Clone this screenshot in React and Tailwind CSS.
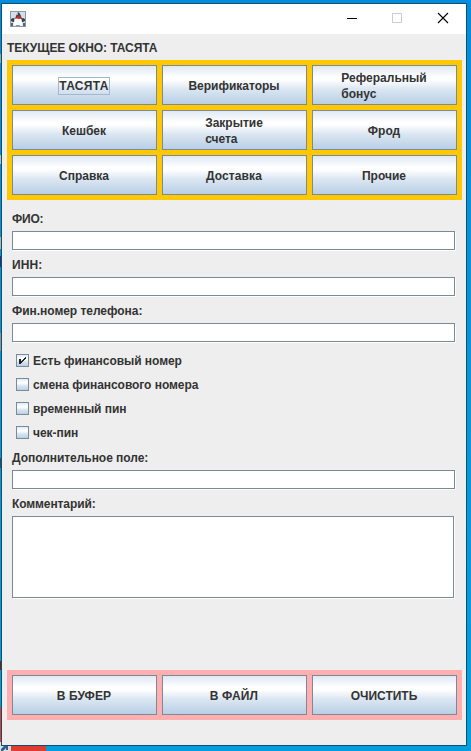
import React from 'react';

const face =
  'border border-[#7a8a99] bg-[linear-gradient(to_bottom,#dfe9f3_0%,#ffffff_30%,#ffffff_36%,#dce7f2_60%,#b8cfe5_100%)]';

function Button({ children, focused, track = '' }) {
  return (
    <button className={`flex h-10 w-[145px] items-center justify-center pr-px pt-px text-left leading-4 ${face} ${track}`}>
      {focused ? (
        <span className="-my-px h-[18px] w-[52px] border border-[#a3b8cc] text-center leading-4 tracking-[0.35px]">{children}</span>
      ) : (
        <span>{children}</span>
      )}
    </button>
  );
}

function Field({ label, track = 'tracking-[-0.04px]' }) {
  return (
    <label className="block">
      <span className={`block h-[27px] pt-[7px] leading-4 ${track}`}>{label}</span>
      <input className="block h-[19px] w-[443px] border border-[#7a8a99] bg-white shadow-[1px_1px_0_#fff] outline-none" />
    </label>
  );
}

function Check({ label, checked }) {
  return (
    <div className="flex h-6 items-center gap-1 pl-1">
      <span className={`-mt-[2px] block size-[13px] ${face}`}>
        {checked && (
          <svg width="11" height="11" viewBox="0 0 11 11" shapeRendering="crispEdges" fill="#222">
            <path d="M2 4h2v5H2zM8 2h1v2H8zM7 3h1v2H7zM6 4h1v2H6zM5 5h1v2H5zM4 6h1v2H4z" />
          </svg>
        )}
      </span>
      <span className="leading-4 tracking-[-0.05px]">{label}</span>
    </div>
  );
}

function JavaIcon() {
  return (
    <svg width="16" height="16" viewBox="0 0 16 16">
      <rect x=".5" y=".5" width="15" height="15" fill="#d3e0ea" stroke="#8a9ba8" />
      <path d="M8 1l1.5 1L11 5l1 3H5l1-3z" fill="#3c4247" />
      <path d="M1 8l2-1 3 1v3H3l-2-1zM15 8l-2-1-3 1v3h3l2-1z" fill="#3c4247" />
      <path d="M4.5 8c2-1 5-1 7 0l1 6.5h-3l-1-1-2 1h-3z" fill="#fff" />
      <path d="M1 12h2v3H1zM13 12h2v3h-2z" fill="#59636b" />
      <path d="M6 14h4v1H6z" fill="#8c979f" />
      <path d="M7 2h1v2H6z" fill="#aeb8bf" />
      <ellipse cx="8.8" cy="6.2" rx="2" ry="1.7" fill="#dc2222" />
    </svg>
  );
}

export default function App() {
  return (
    <div className="relative h-[751px] w-[471px] overflow-hidden bg-[linear-gradient(to_bottom,#008de0,#0796d8_50%,#009fe0)] pl-px pt-[3px] font-['Liberation_Sans',Arial,sans-serif] text-[12px] font-bold text-[#333333]">
      <div className="absolute left-0 top-[54px] h-[9px] w-px bg-[#82b5a0]" />
      <div className="absolute left-0 top-[155px] h-[9px] w-px bg-[#a5cfae]" />
      <div className="absolute left-0 top-[237px] h-[12px] w-px bg-[#aeb4b8]" />
      <div className="absolute left-0 top-[256px] h-[11px] w-px bg-[#103b82]" />
      <div className="absolute left-0 top-[333px] h-[18px] w-px bg-[#8a969b]" />
      <div className="absolute left-0 top-[458px] h-[10px] w-px bg-[#23516b]" />
      <div className="absolute left-0 top-[661px] h-[9px] w-px bg-[#65281b]" />
      <div className="absolute left-0 top-[707px] h-[44px] w-[46px] bg-[#df3c32]" />
      <svg className="absolute left-0 top-[742px]" width="11" height="9" viewBox="0 0 11 9">
        <path d="M0 0h11v9H0z" fill="#d9dedf" />
        <path d="M1 9V7l3-3H2V2h6v6H6V6L3 9z" fill="#315d94" />
      </svg>

      <main className="relative h-[743px] w-[466px] border border-[#174d66] bg-[#eeeeee]">
        <header className="flex h-[30px] items-center bg-white pl-2 pr-4">
          <div className="-mt-px"><JavaIcon /></div>
          <svg className="-mt-[2px] ml-auto" width="103" height="12" viewBox="0 0 103 12" fill="none">
            <path d="M0 6.5h10" stroke="#000" />
            <path d="M45.5 1.5h9v9h-9z" stroke="#ccc" />
            <path d="M91 1l10 10M101 1L91 11" stroke="#000" strokeWidth="1.1" />
          </svg>
        </header>

        <div className="h-[26px] pl-[5px] pt-[6px] leading-4 tracking-[-0.05px]">ТЕКУЩЕЕ ОКНО: ТАСЯТА</div>

        <nav className="ml-[5px] grid w-[455px] grid-cols-[repeat(3,145px)] gap-[5px] bg-[#ffc800] p-[5px]">
          <Button focused>ТАСЯТА</Button>
          <Button>Верификаторы</Button>
          <Button>Реферальный<br />бонус</Button>
          <Button>Кешбек</Button>
          <Button>Закрытие<br />счета</Button>
          <Button>Фрод</Button>
          <Button>Справка</Button>
          <Button track="tracking-[0.1px]">Доставка</Button>
          <Button>Прочие</Button>
        </nav>

        <section className="ml-[10px] pt-1">
          <Field label="ФИО:" track="tracking-[-0.2px]" />
          <Field label="ИНН:" track="tracking-[0.1px]" />
          <Field label="Фин.номер телефона:" />
          <div className="mt-[7px]">
            <Check label="Есть финансовый номер" checked />
            <Check label="смена финансового номера" />
            <Check label="временный пин" />
            <Check label="чек-пин" />
          </div>
          <div className="-mt-[2px]">
            <Field label="Дополнительное поле:" />
          </div>
          <label className="block">
            <span className="block h-[27px] pt-[7px] leading-4 tracking-[-0.1px]">Комментарий:</span>
            <textarea className="block h-[82px] w-[442px] resize-none border border-[#7a8a99] bg-white shadow-[1px_1px_0_#fff] outline-none" />
          </label>
        </section>

        <footer className="ml-[5px] mt-[72px] flex w-[455px] gap-[5px] bg-[#ffafaf] p-[5px]">
          <Button track="tracking-[0.1px]">В БУФЕР</Button>
          <Button track="tracking-[0.1px]">В ФАЙЛ</Button>
          <Button>ОЧИСТИТЬ</Button>
        </footer>
      </main>
    </div>
  );
}
